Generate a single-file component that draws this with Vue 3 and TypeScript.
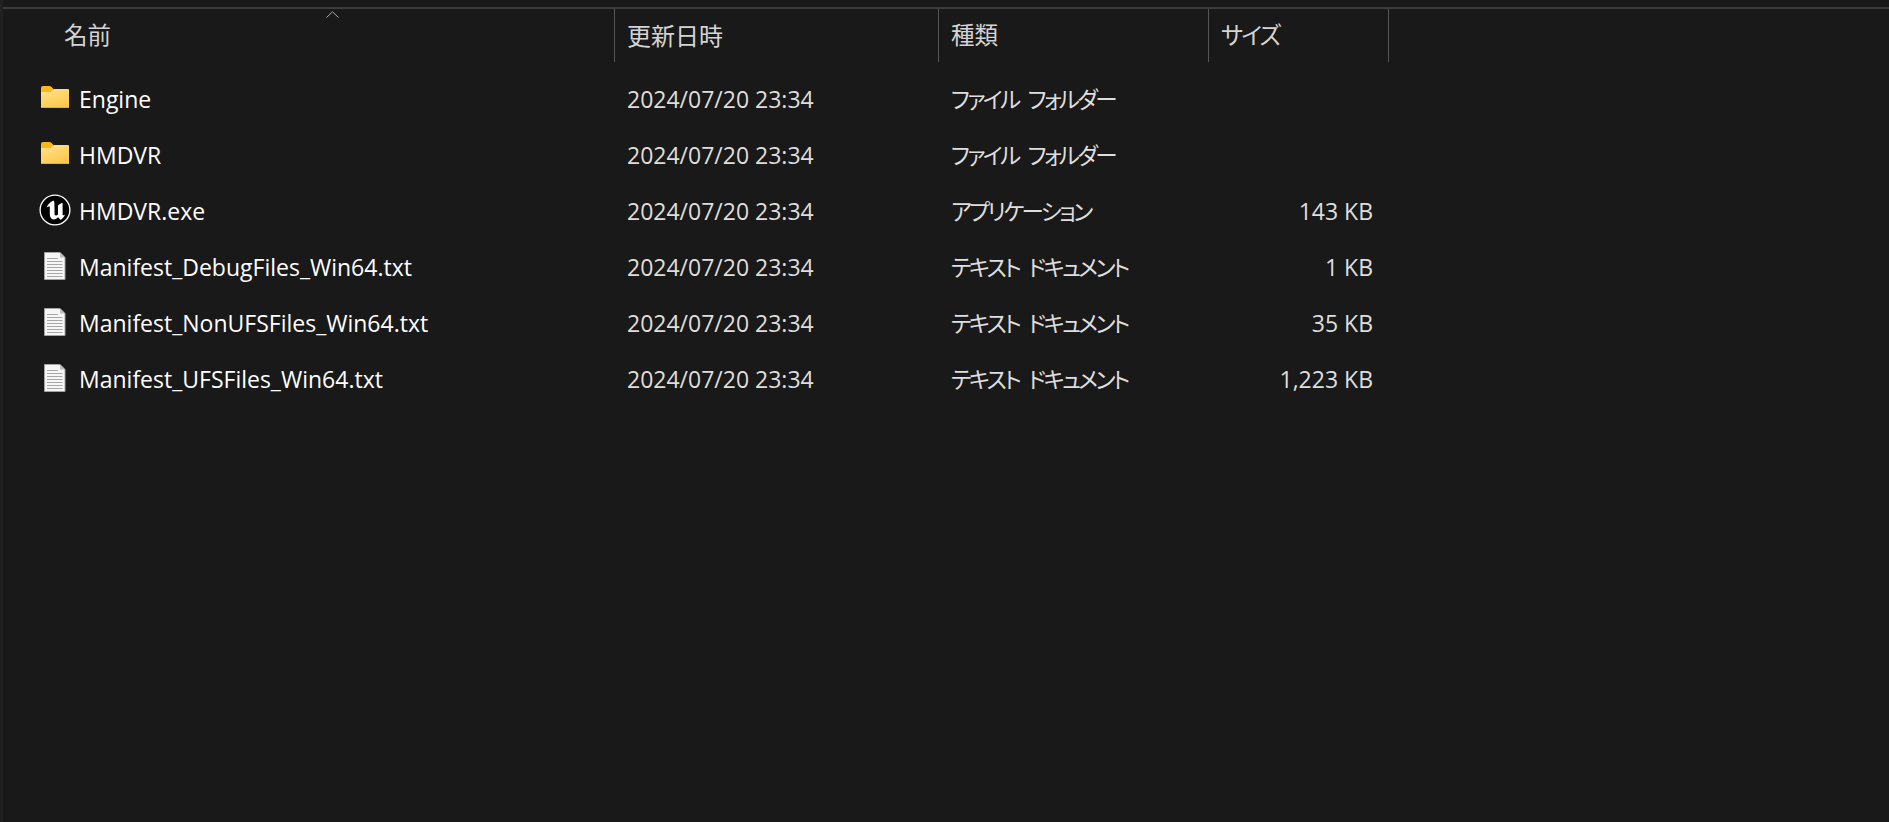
<template>
  <div class="explorer">
    <div class="header">
      <div class="head-cell name-head">名前<span class="sort-arrow"><svg width="13" height="7" viewBox="0 0 13 7"><path d="M0.5 6.5 L6.5 0.8 L12.5 6.5" fill="none" stroke="#a8a8a8" stroke-width="1" /></svg></span></div>
      <div class="head-cell date-head">更新日時</div>
      <div class="head-cell">種類</div>
      <div class="head-cell kana-head">サイズ</div>
    </div>
    <div class="list">
      <div v-for="file in files" :key="file.name" class="row">
        <div class="name-cell">
          <svg class="icon" width="32" height="32" viewBox="0 0 32 32">
            <template v-if="file.kind === 'folder'">
              <path d="M2 6 Q2 4 4 4 L10.5 4 Q11.5 4 12.5 5 L15 7.5 L12 10.5 L2 10.5 Z" fill="#f7b81c" />
              <path d="M2 25 L2 10 L11.5 10 L15 7 L29 7 Q30 7 30 8 L30 25 Q30 26 29 26 L3 26 Q2 26 2 25 Z" fill="url(#folderFill)" />
              <path d="M2 25 Q2 26 3 26 L29 26 Q30 26 30 25 L30 25 L2 25 Z" fill="#eeb030" />
            </template>
            <template v-else-if="file.kind === 'exe'">
              <circle cx="16" cy="16" r="14.9" fill="#000" stroke="#fff" stroke-width="1.3" />
              <path d="M14.5 6.5 C12 7.5 9 9.8 7.5 13.5 C8.8 12.6 10 12.2 10.8 12.6 L10.8 20 C10.8 23 12.5 25.5 14.8 25.5 C16 25.5 17.6 24.5 19 23.2 L21.8 26 C23 25 24.8 23.2 26 20.8 C25 21.4 24.2 21.4 23.6 21 L23.6 8.8 C22 9.2 20.6 10 19 11.4 L19 20.6 C18 21.6 16.6 21.8 15.6 21 L15.4 8.6 C15.3 7.8 15 7 14.5 6.5 Z" fill="#fff" />
            </template>
            <template v-else>
              <path d="M5.5 2.5 L21 2.5 L26 7.5 L26 29.5 L5.5 29.5 Z" fill="#f6f6f6" stroke="#a2a2a2" stroke-width="1" />
              <path d="M21 2.5 L21 7.5 L26 7.5 Z" fill="#bdbdbd" />
              <path d="M8 8.5 H19 M8 11.5 H23.5 M8 14.5 H23.5 M8 17.5 H23.5 M8 20.5 H23.5 M8 23.5 H23.5 M8 26.5 H23.5" stroke="#a8a8a8" stroke-width="1" />
            </template>
          </svg>
          <span class="file-name">{{ file.name }}</span>
        </div>
        <div class="cell">{{ file.date }}</div>
        <div class="cell jp">{{ file.type }}</div>
        <div class="cell size">{{ file.size }}</div>
      </div>
    </div>
    <svg width="0" height="0" class="defs">
      <defs>
        <linearGradient id="folderFill" x1="0.1" y1="0" x2="0.6" y2="1">
          <stop offset="0" stop-color="#ffe28c" />
          <stop offset="1" stop-color="#fdc84a" />
        </linearGradient>
      </defs>
    </svg>
  </div>
</template>

<script setup lang="ts">
interface FileEntry {
  name: string;
  kind: "folder" | "exe" | "text";
  date: string;
  type: string;
  size: string;
}

const stamp = "2024/07/20 23:34";

const files: FileEntry[] = [
  { name: "Engine", kind: "folder", date: stamp, type: "ファイル フォルダー", size: "" },
  { name: "HMDVR", kind: "folder", date: stamp, type: "ファイル フォルダー", size: "" },
  { name: "HMDVR.exe", kind: "exe", date: stamp, type: "アプリケーション", size: "143 KB" },
  { name: "Manifest_DebugFiles_Win64.txt", kind: "text", date: stamp, type: "テキスト ドキュメント", size: "1 KB" },
  { name: "Manifest_NonUFSFiles_Win64.txt", kind: "text", date: stamp, type: "テキスト ドキュメント", size: "35 KB" },
  { name: "Manifest_UFSFiles_Win64.txt", kind: "text", date: stamp, type: "テキスト ドキュメント", size: "1,223 KB" },
];
</script>

<style scoped>
.explorer {
  height: 822px;
  box-sizing: border-box;
  overflow: hidden;
  background: #191919;
  border-left: 3px solid #202020;
  font-family: "Open Sans", "Noto Sans CJK JP", sans-serif;
  font-size: 23px;
  color: #dedede;
  padding-top: 7px;
}
.header {
  display: grid;
  grid-template-columns: 612px 324px 270px 180px;
  height: 53px;
  border-top: 2px solid #3c3c3c;
  margin-left: -3px;
  padding-left: 3px;
}
.head-cell {
  position: relative;
  border-right: 1px solid #555;
  padding: 0 0 0 12px;
  font-size: 23.5px;
  line-height: 53px;
  color: #d4d4d4;
  font-feature-settings: "palt";
}
.date-head {
  font-size: 24px;
}
.kana-head {
  letter-spacing: -1.8px;
}
.name-head {
  padding-left: 61px;
}
.sort-arrow {
  position: absolute;
  left: 323px;
  top: 0;
  line-height: 0;
}
.list {
  padding-top: 11px;
}
.row {
  display: grid;
  grid-template-columns: 611px 324px 270px 180px;
  height: 56px;
  box-sizing: border-box;
  padding-bottom: 3px;
  align-items: center;
  line-height: 53px;
}
.name-cell {
  display: flex;
  align-items: center;
  padding-left: 36px;
  gap: 8px;
}
.icon {
  margin-bottom: 3px;
  flex: none;
}
.file-name {
  color: #fff;
}
.cell {
  padding-left: 13px;
  white-space: pre;
}
.jp {
  font-feature-settings: "palt";
  font-size: 22.5px;
  letter-spacing: -2.6px;
  word-spacing: 6px;
}
.size {
  text-align: right;
  padding: 0 15px 0 0;
}
.defs {
  position: absolute;
}
</style>

<style>
html,
body {
  margin: 0;
  background: #191919;
}
</style>
